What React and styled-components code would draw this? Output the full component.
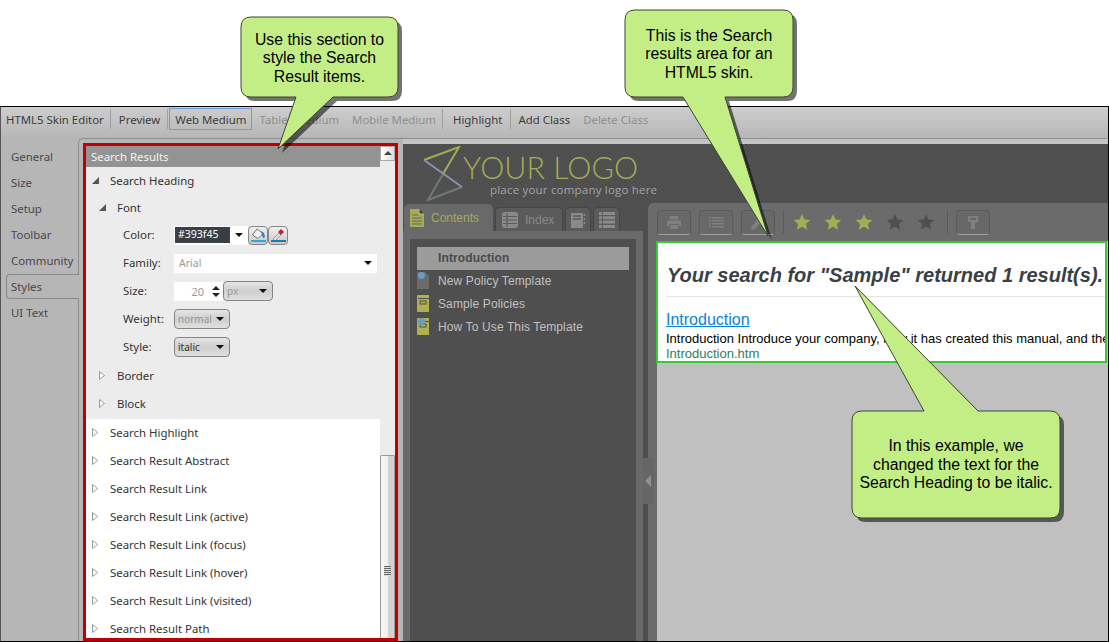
import React from "react";
import styled, { createGlobalStyle } from "styled-components";

const UI_FONT = `"Noto Sans", "Open Sans", sans-serif`;
const ARIAL = `"Liberation Sans", Arial, sans-serif`;
const OLIVE = "#a4ac54";
const ICON_GREY = "#808080";
const DITHER = `repeating-conic-gradient(#4d4d4d 0 25%, #525252 0 50%) 0 0 / 4px 4px`;

const GlobalStyle = createGlobalStyle`
  html, body { margin: 0; padding: 0; background: #fff; }
  * { box-sizing: border-box; }
`;

const callouts = [
  { x: 241, y: 17, w: 157, h: 80, b1: 296, tipX: 278, tipY: 149, b2: 333, pt: 3, lines: ["Use this section to", "style the Search", "Result items."] },
  { x: 625, y: 10, w: 168, h: 87, b1: 683, tipX: 768, tipY: 236, b2: 725, pt: 2, lines: ["This is the Search", "results area for an", "HTML5 skin."] },
  { x: 852, y: 411, w: 208, h: 107, b1: 924, tipX: 855, tipY: 286, b2: 978, pt: 1, lines: ["In this example, we", "changed the text for the", "Search Heading to be italic."] },
];

const calloutPath = ({ x, y, w, h, b1, tipX, tipY, b2 }) => {
  const r = 10;
  const top = tipY < y ? `L${b1} ${y} L${tipX} ${tipY} L${b2} ${y} ` : "";
  const bottom = tipY > y + h ? `L${b2} ${y + h} L${tipX} ${tipY} L${b1} ${y + h} ` : "";
  return `M${x + r} ${y} ${top}L${x + w - r} ${y} Q${x + w} ${y} ${x + w} ${y + r} L${x + w} ${y + h - r} Q${x + w} ${y + h} ${x + w - r} ${y + h} ${bottom}L${x + r} ${y + h} Q${x} ${y + h} ${x} ${y + h - r} L${x} ${y + r} Q${x} ${y} ${x + r} ${y} Z`;
};

const Expanded = () => (
  <svg width="7" height="7" viewBox="0 0 7 7"><path d="M7 0V7H0Z" fill="#555" /></svg>
);
const Collapsed = () => (
  <svg width="6" height="9" viewBox="0 0 6 9"><path d="M.5 .5L5.5 4.5L.5 8.500Z" fill="#fff" stroke="#999" /></svg>
);

const Star = ({ on }) => (
  <svg width="18" height="18" viewBox="0 0 18 18">
    <path d="M9 1l2.400 5.400 5.900.6-4.400 4 1.300 5.800L9 13.800 3.800 16.800 5.100 11 .7 7l5.900-.6z" fill={on ? OLIVE : "#4f4f4f"} />
  </svg>
);

const PrintIcon = () => (
  <svg width="14" height="13" viewBox="0 0 14 13" fill={ICON_GREY}>
    <path d="M3 0h8v3.500H3zM1.500 4.500h11A1.500 1.500 0 0 1 14 6v4h-2V8H2v2H0V6a1.500 1.500 0 0 1 1.500-1.500zM3 9h8v4H3z" />
  </svg>
);
const ListIcon = () => (
  <svg width="15" height="11" viewBox="0 0 15 11" fill={ICON_GREY}>
    <path d="M0 0h2v1.500H0zM3 0h12v1.500H3zM0 3h2v1.500H0zM3 3h12v1.500H3zM0 6h2v1.500H0zM3 6h12v1.500H3zM0 9h2v1.500H0zM3 9h12v1.500H3z" />
  </svg>
);
const PencilIcon = () => (
  <svg width="14" height="15" viewBox="0 0 14 15" fill={ICON_GREY}><path d="M10 0l4 3L4 14l-4 1 1-4z" /></svg>
);
const KeyIcon = () => (
  <svg width="10" height="13" viewBox="0 0 10 13" fill={ICON_GREY}>
    <path d="M0 0h10v6H7v7H3V6H0zM2 2v2h6V2z" fillRule="evenodd" />
  </svg>
);
const ContentsIcon = () => (
  <svg width="14" height="18" viewBox="0 0 14 18">
    <path d="M0 0h9l5 5v13H0z" fill={OLIVE} />
    <path d="M2 6h6M2 9h10M2 12h10M2 15h10M10 1v3h3" stroke="#666" strokeWidth="1" />
  </svg>
);
const IndexIcon = () => (
  <svg width="16" height="16" viewBox="0 0 16 16">
    <rect width="16" height="16" rx="3" fill="#8a8a8a" />
    <path d="M1 4.500h14M1 8h14M1 11.500h14M5 1v14" stroke="#5b5b5b" strokeWidth="1.200" />
  </svg>
);
const GlossaryIcon = () => (
  <svg width="16" height="16" viewBox="0 0 16 16">
    <path d="M1 1h11a1 1 0 0 1 1 1v13a1 1 0 0 1-1 1H1z" fill="#8a8a8a" />
    <path d="M3 4h8M3 7h8" stroke="#5b5b5b" strokeWidth="1.500" />
    <path d="M14.500 2v2M14.500 6v2M14.500 10v2" stroke="#8a8a8a" strokeWidth="1.400" />
  </svg>
);
const SequenceIcon = () => (
  <svg width="16" height="16" viewBox="0 0 16 16" fill="#8a8a8a">
    <path d="M0 0h3v3H0zM0 4.300h3v3H0zM0 8.600h3v3H0zM0 13h3v3H0zM4 0h12v3H4zM4 4.300h12v3H4zM4 8.600h12v3H4zM4 13h12v3H4z" />
  </svg>
);
const NavIcon = ({ book, badge }) => (
  <svg width="12" height="17" viewBox="0 0 12 17">
    {book ? (
      <>
        <path d="M1 0h11v3H1v1h11v13H1a1 1 0 0 1-1-1V1a1 1 0 0 1 1-1z" fill="#b0b050" />
        <rect x="3" y="6" width="6" height="3" fill="none" stroke="#4f4f4f" />
      </>
    ) : (
      <path d="M0 0h8l4 4v13H0z" fill="#6c6c6c" />
    )}
    {badge && <circle cx="4.500" cy="3.500" r="3.500" fill="#6b9cc6" />}
  </svg>
);
const PaintIcon = () => (
  <svg width="15" height="15" viewBox="0 0 15 15">
    <path d="M6 1l6 4.500-5 5L1.500 7z" fill="#f2f2f2" stroke="#777" />
    <path d="M10 3l3 2 1 4-2 1-1-3z" fill="#2f7fc0" />
    <rect x="0" y="12" width="15" height="2" fill="#37a4e0" />
  </svg>
);
const DropperIcon = () => (
  <svg width="15" height="15" viewBox="0 0 15 15">
    <path d="M2 11l6-6 2 2-6 6z" fill="#ddd" stroke="#888" strokeWidth=".7" />
    <path d="M8 3l2-2 3 3-2 2-1 1-3-3z" fill="#c62030" />
    <rect x="0" y="12" width="15" height="2" fill="#1a7fb0" />
  </svg>
);

const sideTabs = ["General", "Size", "Setup", "Toolbar", "Community", "Styles", "UI Text"];
const collapsedItems = [
  "Search Highlight",
  "Search Result Abstract",
  "Search Result Link",
  "Search Result Link (active)",
  "Search Result Link (focus)",
  "Search Result Link (hover)",
  "Search Result Link (visited)",
  "Search Result Path",
];
const navItems = [
  { label: "New Policy Template", badge: true },
  { label: "Sample Policies", book: true },
  { label: "How To Use This Template", book: true, badge: true },
];

export default function App() {
  return (
    <Page>
      <GlobalStyle />
      <Blank />
      <Window>
        <Toolbar>
          <ToolText>HTML5 Skin Editor</ToolText>
          <ToolSep />
          <ToolText>Preview</ToolText>
          <ToolSep />
          <ToolText $active>Web Medium</ToolText>
          <ToolText $muted $mr={11}>Tablet Medium</ToolText>
          <ToolText $muted>Mobile Medium</ToolText>
          <ToolSep />
          <ToolText $ml={2} $mr={1}>Highlight</ToolText>
          <ToolSep />
          <ToolText $mr={11}>Add Class</ToolText>
          <ToolText $muted>Delete Class</ToolText>
        </Toolbar>
        <Body>
          <SideTabs>
            {sideTabs.map((t) => (
              <SideTab key={t} $selected={t === "Styles"}>{t}</SideTab>
            ))}
          </SideTabs>
          <Panel>
            <RedFrame>
              <Tree>
                <TreeHeader>Search Results</TreeHeader>
                <OpenSection>
                  <TreeRow $h={27} $indent={6}>
                    <Toggle><Expanded /></Toggle>Search Heading
                  </TreeRow>
                  <TreeRow $h={27} $indent={13}>
                    <Toggle><Expanded /></Toggle>Font
                  </TreeRow>
                  <PropRow>
                    <PropLabel>Color:</PropLabel>
                    <ColorField>
                      <Swatch>#393f45</Swatch>
                      <Arrow />
                    </ColorField>
                    <IconButton><PaintIcon /></IconButton>
                    <IconButton><DropperIcon /></IconButton>
                  </PropRow>
                  <PropRow>
                    <PropLabel>Family:</PropLabel>
                    <FamilyField>Arial<Arrow /></FamilyField>
                  </PropRow>
                  <PropRow>
                    <PropLabel>Size:</PropLabel>
                    <Spinner>
                      20
                      <SpinArrows>
                        <SpinUp />
                        <SpinDown />
                      </SpinArrows>
                    </Spinner>
                    <Select $w={50}>px<Arrow /></Select>
                  </PropRow>
                  <PropRow>
                    <PropLabel>Weight:</PropLabel>
                    <Select $w={56}>normal<Arrow /></Select>
                  </PropRow>
                  <PropRow>
                    <PropLabel>Style:</PropLabel>
                    <Select $w={56} $dark>italic<Arrow /></Select>
                  </PropRow>
                  <Gap />
                  <TreeRow $indent={13}>
                    <Toggle><Collapsed /></Toggle>Border
                  </TreeRow>
                  <TreeRow $indent={13}>
                    <Toggle><Collapsed /></Toggle>Block
                  </TreeRow>
                </OpenSection>
                {collapsedItems.map((item) => (
                  <TreeRow key={item} $indent={6}>
                    <Toggle><Collapsed /></Toggle>{item}
                  </TreeRow>
                ))}
              </Tree>
              <Scrollbar>
                <ScrollUp />
                <ScrollThumb>
                  <Grip />
                </ScrollThumb>
              </Scrollbar>
            </RedFrame>
          </Panel>
          <Skin>
            <Pane>
              <LogoBar>
                <svg width="42" height="56" viewBox="0 0 42 56" fill="none" strokeWidth="2">
                  <path d="M1 14L36 1L20 28" stroke={OLIVE} />
                  <path d="M20 28L5 54L39 41" stroke="#6f7a6f" />
                  <path d="M1 14L39 41" stroke="#8494aa" />
                </svg>
                <LogoText>
                  <LogoName>YOUR LOGO</LogoName>
                  <LogoTag>place your company logo here</LogoTag>
                </LogoText>
              </LogoBar>
              <Columns>
                <NavColumn>
                  <SkinTabs>
                    <SkinTab $selected $w={89}><ContentsIcon />Contents</SkinTab>
                    <SkinTab $w={68}><IndexIcon />Index</SkinTab>
                    <SkinTab $w={26}><GlossaryIcon /></SkinTab>
                    <SkinTab $w={27}><SequenceIcon /></SkinTab>
                  </SkinTabs>
                  <NavFrame>
                    <NavList>
                      <NavRow $selected>Introduction</NavRow>
                      {navItems.map((n) => (
                        <NavRow key={n.label}>
                          <NavIconSlot><NavIcon book={n.book} badge={n.badge} /></NavIconSlot>
                          {n.label}
                        </NavRow>
                      ))}
                    </NavList>
                  </NavFrame>
                </NavColumn>
                <Splitter>
                  <SplitHandle />
                </Splitter>
                <MainColumn>
                  <SkinToolbar>
                    <SkinButton><PrintIcon /></SkinButton>
                    <SkinButton><ListIcon /></SkinButton>
                    <SkinButton><PencilIcon /></SkinButton>
                    <SkinSep />
                    <Stars>
                      {[true, true, true, false, false].map((on, i) => (
                        <Star key={i} on={on} />
                      ))}
                    </Stars>
                    <SkinSep />
                    <SkinButton><KeyIcon /></SkinButton>
                  </SkinToolbar>
                  <Results>
                    <GreenFrame>
                      <ResultHeading>Your search for "Sample" returned 1 result(s).</ResultHeading>
                      <ResultRule />
                      <ResultLink>Introduction</ResultLink>
                      <ResultAbstract>Introduction Introduce your company, how it has created this manual, and the</ResultAbstract>
                      <ResultPath>Introduction.htm</ResultPath>
                    </GreenFrame>
                  </Results>
                </MainColumn>
              </Columns>
            </Pane>
          </Skin>
        </Body>
      </Window>

      {callouts.map((c) => (
        <CalloutShape key={c.x} width="1109" height="642" viewBox="0 0 1109 642">
          <path d={calloutPath(c)} transform="translate(4 4)" fill="#000" fillOpacity=".55" />
          <path d={calloutPath(c)} fill="#c3ee85" stroke="#3c4632" strokeWidth="1" />
        </CalloutShape>
      ))}
      {callouts.map((c) => (
        <CalloutText key={c.x} $x={c.x} $y={c.y} $w={c.w} $h={c.h} $pt={c.pt}>
          <div>
            {c.lines.map((l) => (
              <div key={l}>{l}</div>
            ))}
          </div>
        </CalloutText>
      ))}
    </Page>
  );
}

const Page = styled.div`
  position: relative;
  display: flex;
  flex-direction: column;
  width: 1109px;
  height: 642px;
  overflow: hidden;
  font-family: ${UI_FONT};
  font-size: 11.400px;
`;

const Blank = styled.div`
  height: 106px;
  flex: none;
`;

const Window = styled.div`
  flex: 1;
  min-height: 0;
  display: flex;
  flex-direction: column;
  border: 1px solid #000;
  border-left-color: #555;
  background: #b6b6b6;
`;

const Toolbar = styled.div`
  height: 31px;
  flex: none;
  display: flex;
  align-items: flex-start;
  padding: 1px 0 0 4px;
  background: linear-gradient(#cdcdcd, #b6b6b6);
`;

const ToolText = styled.div`
  height: 22px;
  line-height: 22px;
  padding: 0 ${(p) => (p.$active ? "5px" : "0")};
  margin-left: ${(p) => (p.$active ? "-5px" : `${p.$ml || 0}px`)};
  margin-right: ${(p) => (p.$active ? "6px" : `${p.$mr || 0}px`)};
  color: ${(p) => (p.$muted ? "#8f8f8f" : "#3c3c3c")};
  border: ${(p) => (p.$active ? "1px solid #6f9fcf" : "1px solid transparent")};
  white-space: nowrap;
`;

const ToolSep = styled.div`
  width: 1px;
  height: 20px;
  margin: 1px 6.500px 0 5.500px;
  background: #a0a0a0;
`;

const Body = styled.div`
  flex: 1;
  min-height: 0;
  display: flex;
`;

const SideTabs = styled.div`
  width: 77px;
  flex: none;
  padding: 6px 0 0 5px;
`;

const SideTab = styled.div`
  height: ${(p) => (p.$selected ? "25px" : "26px")};
  line-height: 24px;
  padding-left: 4px;
  margin: ${(p) => (p.$selected ? "0 -1px 1px 0" : "0")};
  color: #484848;
  position: relative;
  z-index: 1;
  background: #b6b6b6;
  border: ${(p) => (p.$selected ? "1px solid #8a8a8a" : "1px solid transparent")};
  border-right: none;
  border-radius: 4px 0 0 4px;
`;

const Panel = styled.div`
  width: 325px;
  flex: none;
  display: flex;
  padding: 4px 5px 0 4px;
  border-left: 1px solid #8e8e8e;
  border-top: 1px solid #8e8e8e;
  border-top-left-radius: 5px;
`;

const RedFrame = styled.div`
  flex: 1;
  min-width: 0;
  display: flex;
  border: 3px solid #c00000;
  background: #fff;
  overflow: hidden;
`;

const Tree = styled.div`
  flex: 1;
  min-width: 0;
  color: #333;
`;

const TreeHeader = styled.div`
  height: 21px;
  line-height: 21px;
  padding-left: 5px;
  background: #939393;
  color: #f4f4f4;
`;

const OpenSection = styled.div`
  height: 252px;
  background: #ececec;
`;

const TreeRow = styled.div`
  height: ${(p) => p.$h || 28}px;
  display: flex;
  align-items: center;
  padding: 0 0 ${(p) => (p.$h ? 0 : 2)}px ${(p) => p.$indent}px;
`;

const Toggle = styled.span`
  width: 18px;
  flex: none;
  display: flex;
  align-items: center;
`;

const Gap = styled.div`
  height: 1px;
`;

const PropRow = styled.div`
  height: 28px;
  display: flex;
  align-items: center;
  padding-left: 37px;
`;

const PropLabel = styled.div`
  width: 51px;
  flex: none;
  padding-bottom: 2px;
`;

const Arrow = styled.span`
  margin-left: auto;
  flex: none;
  width: 0;
  height: 0;
  border-left: 4px solid transparent;
  border-right: 4px solid transparent;
  border-top: 4px solid #111;
`;

const ColorField = styled.div`
  width: 74px;
  height: 19px;
  display: flex;
  align-items: center;
  padding: 1px 5px 1px 1px;
  background: #fff;
`;

const Swatch = styled.div`
  width: 55px;
  height: 16px;
  line-height: 15px;
  padding-left: 3px;
  background: #393f45;
  color: #fff;
  font-size: 10.500px;
`;

const IconButton = styled.div`
  width: 20px;
  height: 19px;
  display: flex;
  align-items: center;
  justify-content: center;
  border: 1px solid #858585;
  border-radius: 4px;
  background: linear-gradient(#f0f0f0, #c8c8c8);
`;

const FamilyField = styled.div`
  width: 203px;
  height: 19px;
  display: flex;
  align-items: center;
  padding: 0 5px;
  background: #fff;
  color: #999;
  font-size: 10.500px;
`;

const Spinner = styled.div`
  width: 49px;
  height: 19px;
  display: flex;
  align-items: center;
  justify-content: flex-end;
  padding-right: 3px;
  background: #fff;
  color: #999;
  font-size: 11px;
`;

const SpinArrows = styled.div`
  display: flex;
  flex-direction: column;
  gap: 3px;
  margin-left: 8px;
`;

const SpinUp = styled.span`
  width: 0;
  height: 0;
  border-left: 4px solid transparent;
  border-right: 4px solid transparent;
  border-bottom: 4px solid #222;
`;

const SpinDown = styled.span`
  width: 0;
  height: 0;
  border-left: 4px solid transparent;
  border-right: 4px solid transparent;
  border-top: 4px solid #222;
`;

const Select = styled.div`
  width: ${(p) => p.$w}px;
  height: 20px;
  display: flex;
  align-items: center;
  padding: 0 5px 0 3px;
  border: 1px solid #858585;
  border-radius: 4px;
  background: linear-gradient(#e4e4e4, #cfcfcf 50%, #e0e0e0);
  color: ${(p) => (p.$dark ? "#333" : "#9a9a9a")};
  font-size: 10px;
`;

const Scrollbar = styled.div`
  width: 15px;
  flex: none;
  display: flex;
  flex-direction: column;
  background: #ececec;
`;

const ScrollUp = styled.div`
  height: 15px;
  flex: none;
  border: 1px solid #aaa;
  background: linear-gradient(90deg, #fff, #ddd);
  position: relative;
  &::after {
    content: "";
    position: absolute;
    left: 3px;
    top: 4px;
    border-left: 4px solid transparent;
    border-right: 4px solid transparent;
    border-bottom: 4px solid #444;
  }
`;

const ScrollThumb = styled.div`
  flex: 1;
  margin-top: 294px;
  padding-top: 110px;
  display: flex;
  justify-content: center;
  border: 1px solid #999;
  border-bottom: none;
  border-radius: 2px 2px 0 0;
  background: linear-gradient(90deg, #f6f6f6, #f0f0f0 50%, #cfcfcf 60%, #d4d4d4);
`;

const Grip = styled.div`
  width: 7px;
  height: 10px;
  background: repeating-linear-gradient(#666 0 1px, #ddd 1px 2px);
`;

const Skin = styled.div`
  flex: 1;
  min-width: 0;
  display: flex;
  padding-top: 5px;
  background: #c4c4c4;
  border-top: 1px solid #8e8e8e;
`;

const Pane = styled.div`
  flex: 1;
  min-width: 0;
  display: flex;
  flex-direction: column;
  background: #4f4f4f;
`;

const LogoBar = styled.div`
  height: 59px;
  flex: none;
  display: flex;
  padding: 2px 0 0 20px;
  background: ${DITHER};
`;

const LogoText = styled.div`
  margin-left: -2px;
`;

const LogoName = styled.div`
  font-family: Lato, ${ARIAL};
  font-weight: 300;
  font-size: 30.500px;
  line-height: 33px;
  margin-top: 5px;
  color: ${OLIVE};
  white-space: nowrap;
`;

const LogoTag = styled.div`
  margin-left: 27px;
  font-family: "Open Sans", ${ARIAL};
  font-size: 11.500px;
  line-height: 12px;
  letter-spacing: 0.2px;
  color: #a2a2a2;
  white-space: nowrap;
`;

const Columns = styled.div`
  flex: 1;
  min-height: 0;
  display: flex;
`;

const NavColumn = styled.div`
  width: 240px;
  flex: none;
  display: flex;
  flex-direction: column;
`;

const SkinTabs = styled.div`
  height: 28px;
  flex: none;
  display: flex;
  align-items: flex-end;
  gap: 2px;
  padding-left: 1px;
  background: ${DITHER};
`;

const SkinTab = styled.div`
  width: ${(p) => p.$w}px;
  height: ${(p) => (p.$selected ? 27 : 24)}px;
  display: flex;
  align-items: center;
  justify-content: ${(p) => (p.$w < 40 ? "center" : "flex-start")};
  gap: 7px;
  padding-left: ${(p) => (p.$w < 40 ? 0 : 6)}px;
  border-radius: 5px 5px 0 0;
  background: ${(p) => (p.$selected ? "#696969" : "#5b5b5b")};
  border: ${(p) => (p.$selected ? "none" : "1px solid #454545")};
  border-bottom: none;
  color: ${(p) => (p.$selected ? OLIVE : "#8a8a8a")};
  font-family: ${ARIAL};
  font-size: 12px;
`;

const NavFrame = styled.div`
  flex: 1;
  min-height: 0;
  padding: 8px 7px 0;
  background: #6a6a6a;
  display: flex;
`;

const NavList = styled.div`
  flex: 1;
  padding: 8px 7px;
  background: #4f4f4f;
`;

const NavRow = styled.div`
  height: 23px;
  display: flex;
  align-items: center;
  padding: 0 0 2px ${(p) => (p.$selected ? "21px" : "0")};
  font-family: ${ARIAL};
  font-size: 12px;
  letter-spacing: 0.12px;
  font-weight: ${(p) => (p.$selected ? 700 : 400)};
  color: ${(p) => (p.$selected ? "#4a4a4a" : "#c0c0c0")};
  background: ${(p) => (p.$selected ? "#9b9b9b" : "transparent")};
`;

const NavIconSlot = styled.span`
  width: 21px;
  flex: none;
  display: flex;
`;

const Splitter = styled.div`
  width: 5px;
  flex: none;
  position: relative;
  background: #4f4f4f;
`;

const SplitHandle = styled.div`
  position: absolute;
  left: 0;
  top: 255px;
  width: 11px;
  height: 46px;
  z-index: 1;
  background: #666;
  border-radius: 0 3px 3px 0;
  &::after {
    content: "";
    position: absolute;
    left: 2px;
    top: 17px;
    border-top: 6px solid transparent;
    border-bottom: 6px solid transparent;
    border-right: 6px solid #8f8f8f;
  }
`;

const MainColumn = styled.div`
  flex: 1;
  min-width: 0;
  display: flex;
  flex-direction: column;
  background: #6b6b6b;
  border-top-left-radius: 6px;
`;

const SkinToolbar = styled.div`
  height: 38px;
  flex: none;
  display: flex;
  align-items: flex-start;
  gap: 8px;
  padding: 7px 0 0 9px;
`;

const SkinButton = styled.div`
  width: 34px;
  height: 25px;
  display: flex;
  align-items: center;
  justify-content: center;
  border: 1px solid #5a5a5a;
  border-bottom-color: #a0a0a0;
  border-radius: 4px;
  background: #686868;
`;

const SkinSep = styled.div`
  width: 1px;
  height: 24px;
  background: #5a5a5a;
`;

const Stars = styled.div`
  display: flex;
  gap: 13px;
  padding-top: 3px;
  width: 146px;
  margin-left: 1px;
`;

const Results = styled.div`
  flex: 1;
  min-height: 0;
  margin-left: 9px;
  background: #c0c0c0;
`;

const GreenFrame = styled.div`
  height: 122px;
  width: 451px;
  margin-left: -1px;
  padding: 20px 0 0 9px;
  border: 2px solid #33cc33;
  background: #fff;
  overflow: hidden;
  font-family: ${ARIAL};
  white-space: nowrap;
`;

const ResultHeading = styled.div`
  font-size: 20px;
  line-height: 24px;
  font-weight: 700;
  font-style: italic;
  color: #393f45;
`;

const ResultRule = styled.div`
  height: 1px;
  margin: 9px 0 14px -1px;
  background: #e4e4e4;
`;

const ResultLink = styled.div`
  font-size: 16px;
  line-height: 18px;
  margin-left: -1px;
  color: #0a84d6;
  text-decoration: underline;
`;

const ResultAbstract = styled.div`
  font-size: 13px;
  line-height: 14px;
  margin: 3px 0 0 -1px;
  color: #000;
`;

const ResultPath = styled.div`
  font-size: 13px;
  line-height: 15px;
  margin-left: -1px;
  color: #2e7d5e;
`;

const CalloutShape = styled.svg`
  position: absolute;
  left: 0;
  top: 0;
  pointer-events: none;
`;

const CalloutText = styled.div`
  position: absolute;
  left: ${(p) => p.$x}px;
  top: ${(p) => p.$y}px;
  width: ${(p) => p.$w}px;
  height: ${(p) => p.$h}px;
  padding-top: ${(p) => p.$pt}px;
  display: flex;
  align-items: center;
  justify-content: center;
  text-align: center;
  font-family: ${ARIAL};
  font-size: 15.800px;
  line-height: 18.500px;
  color: #000;
  white-space: nowrap;
`;
